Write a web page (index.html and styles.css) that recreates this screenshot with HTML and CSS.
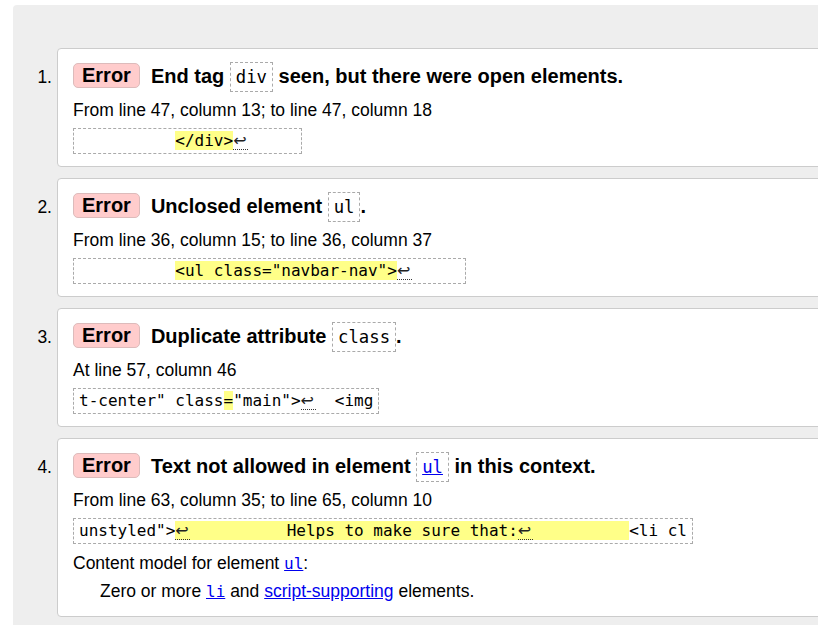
FILE: index.html
```html
<!DOCTYPE html>
<html lang="en">
<head>
<meta charset="utf-8">
<title>Validator messages</title>
<link rel="stylesheet" href="styles.css">
</head>
<body>
<div class="panel">
  <ol class="messages">
    <li class="msg">
      <span class="num">1.</span>
      <div class="card">
        <div class="title">
          <span class="badge">Error</span>
          <span class="text">End tag <code class="tc">div</code> seen, but there were open elements.</span>
        </div>
        <p class="loc">From line 47, column 13; to line 47, column 18</p>
        <code class="extract">          <span class="hl">&lt;/div&gt;</span><span class="lf">↩</span>     </code>
      </div>
    </li>
    <li class="msg">
      <span class="num">2.</span>
      <div class="card">
        <div class="title">
          <span class="badge">Error</span>
          <span class="text">Unclosed element <code class="tc">ul</code>.</span>
        </div>
        <p class="loc">From line 36, column 15; to line 36, column 37</p>
        <code class="extract">          <span class="hl">&lt;ul class="navbar-nav"&gt;</span><span class="lf">↩</span>     </code>
      </div>
    </li>
    <li class="msg">
      <span class="num">3.</span>
      <div class="card">
        <div class="title">
          <span class="badge">Error</span>
          <span class="text">Duplicate attribute <code class="tc">class</code>.</span>
        </div>
        <p class="loc">At line 57, column 46</p>
        <code class="extract">t-center" class<span class="hl">=</span>"main"&gt;<span class="lf">↩</span>  &lt;img</code>
      </div>
    </li>
    <li class="msg">
      <span class="num">4.</span>
      <div class="card">
        <div class="title">
          <span class="badge">Error</span>
          <span class="text">Text not allowed in element <code class="tc"><a href="#ul">ul</a></code> in this context.</span>
        </div>
        <p class="loc">From line 63, column 35; to line 65, column 10</p>
        <code class="extract">unstyled"&gt;<span class="hl"><span class="lf">↩</span>          Helps to make sure that:<span class="lf">↩</span>          </span>&lt;li cl</code>
        <p class="model">Content model for element <code class="mono"><a href="#ul">ul</a></code>:</p>
        <p class="model-desc">Zero or more <code class="mono"><a href="#li">li</a></code> and <a href="#script">script-supporting</a> elements.</p>
      </div>
    </li>
  </ol>
</div>
</body>
</html>
```

FILE: styles.css
```css
html, body {
  margin: 0;
  padding: 0;
  overflow: hidden;
  background: #fff;
}

body {
  font-family: "Liberation Sans", Arial, sans-serif;
  font-size: 17.5px;
  color: #000;
}

.panel {
  margin: 5px 0 0 13px;
  width: 900px;
  min-height: 700px;
  background: #eee;
  border-radius: 4px 0 0 0;
  padding-top: 43px;
}

.messages {
  list-style: none;
  margin: 0;
  padding: 0;
  display: flex;
  flex-direction: column;
  gap: 11px;
}

.msg {
  display: flex;
  align-items: flex-start;
}

.num {
  width: 39px;
  padding-right: 5px;
  padding-top: 14px;
  line-height: 30px;
  text-align: right;
  flex: none;
}

.card {
  flex: 1;
  background: #fff;
  border: 1px solid #ccc;
  border-radius: 4px;
  padding: 13px 15px 12px;
}

.title {
  display: flex;
  align-items: flex-start;
  gap: 11px;
  height: 30px;
  font-size: 20px;
  font-weight: bold;
  line-height: 29px;
}

.text {
  height: 30px;
}

.badge {
  flex: none;
  margin-top: 1px;
  height: 23px;
  line-height: 23px;
  padding: 0 8px;
  background: #fcc;
  border: 1px solid #dbb;
  border-radius: 5px;
}

.tc {
  font-family: "DejaVu Sans Mono", monospace;
  font-weight: normal;
  font-size: 17.3px;
  line-height: 20px;
  padding: 4px 5px;
  border: 1px dashed #aaa;
}

.loc {
  margin: 8px 0 0;
  line-height: 20px;
}

.extract {
  display: inline-block;
  margin-top: 8px;
  font-family: "DejaVu Sans Mono", monospace;
  font-size: 16px;
  line-height: 20px;
  white-space: pre;
  padding: 2px 5px;
  border: 1px dashed #aaa;
  vertical-align: top;
}

.hl {
  background: #ff8;
}

.lf {
  display: inline-block;
  width: 15px;
  font-family: "DejaVu Sans", sans-serif;
  font-size: 16px;
  line-height: 17px;
  border-bottom: 1px dotted #333;
  color: #222;
  vertical-align: baseline;
}

.model {
  margin: 9px 0 0;
  line-height: 20px;
}

.model-desc {
  margin: 7px 0 2px 27px;
  line-height: 20px;
}

.mono {
  font-family: "DejaVu Sans Mono", monospace;
  font-size: 16px;
}

a {
  color: #00e;
  text-decoration: underline;
}
```
